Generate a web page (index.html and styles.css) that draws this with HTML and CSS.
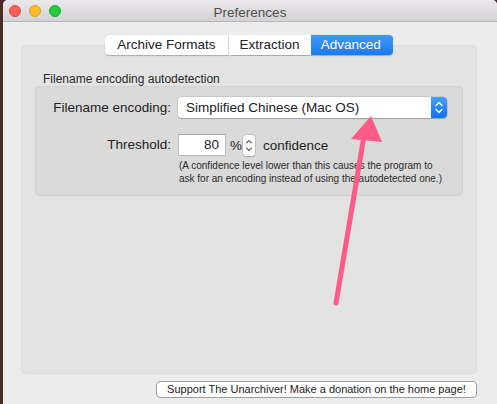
FILE: index.html
```html
<!DOCTYPE html>
<html>
  <head>
    <title>Preferences</title>
    <link rel="stylesheet" href="styles.css">
  </head>
  <body>
    <div class="window">
      <div class="titlebar">
        <div class="lights">
          <span class="light red"></span>
          <span class="light yellow"></span>
          <span class="light green"></span>
        </div>
        <div class="title">Preferences</div>
      </div>
      <div class="content">
        <div class="tabs">
          <div class="tab">Archive Formats</div>
          <div class="tab">Extraction</div>
          <div class="tab active">Advanced</div>
        </div>
        <div class="panel">
          <div class="groupLabel">Filename encoding autodetection</div>
          <div class="group">
            <div class="label">Filename encoding:</div>
            <div class="popup">
              <span class="popupText">Simplified Chinese (Mac OS)</span>
              <span class="popupCap">
                <svg width="16" height="21" viewBox="0 0 16 21">
                  <path d="M5 8.5 L8 5.5 L11 8.5 M5 12.5 L8 15.5 L11 12.5" fill="none" stroke="#fff" stroke-width="1.3" stroke-linecap="round" stroke-linejoin="round"/>
                </svg>
              </span>
            </div>
            <div class="label threshLabel">Threshold:</div>
            <div class="threshRow">
              <div class="field">80</div>
              <span class="pct">%</span>
              <span class="stepper">
                <svg width="12" height="21" viewBox="0 0 12 21">
                  <path d="M3.5 8 L6 5.5 L8.5 8 M3.5 13 L6 15.5 L8.5 13" fill="none" stroke="#6a6a6a" stroke-width="1.1" stroke-linecap="round" stroke-linejoin="round"/>
                </svg>
              </span>
              <span class="conf">confidence</span>
            </div>
            <div></div>
            <div class="note">(A confidence level lower than this causes the program to<br>ask for an encoding instead of using the autodetected one.)</div>
          </div>
        </div>
        <div class="footer">
          <div class="button">Support The Unarchiver! Make a donation on the home page!</div>
        </div>
      </div>
    </div>
    <svg class="arrow" width="497" height="404" viewBox="0 0 497 404">
      <line x1="336" y1="303" x2="364" y2="136" stroke="#fd5a8a" stroke-width="5" stroke-linecap="round"/>
      <polygon points="371,116 351,139 382,142" fill="#fd5a8a"/>
    </svg>
  </body>
</html>
```

FILE: styles.css
```css
body{
    margin:0;
    background:#4b2a28;
    font-family: "Liberation Sans", Arial, sans-serif;
    color:#222;
    overflow:hidden;
}

.window{
    margin-left:3px;
    height:404px;
    background:#ececec;
    border-top-left-radius:5px;
    border-top-right-radius:5px;
    overflow:hidden;
}

.titlebar{
    height:21px;
    border-bottom:1px solid #b8b6b8;
    background:linear-gradient(#ebe9eb, #d4d2d4);
    display:flex;
    align-items:center;
    position:relative;
}
.lights{
    display:flex;
    gap:8px;
    padding-left:6px;
}
.light{
    width:12px;
    height:12px;
    border-radius:50%;
    box-sizing:border-box;
}
.red{ background:#fc5f57; border:1px solid #e2463f; }
.yellow{ background:#fdbc2e; border:1px solid #e1a116; }
.green{ background:#28c840; border:1px solid #14ae2b; }
.title{
    position:absolute;
    left:0;
    right:0;
    top:5px;
    text-align:center;
    font-size:13.5px;
    color:#4d4d4d;
    pointer-events:none;
}

.content{
    padding:13px 20px 0 18px;
}

.tabs{
    display:flex;
    justify-content:center;
    position:relative;
    z-index:1;
    margin-bottom:-10px;
}
.tab{
    height:20px;
    line-height:20px;
    font-size:13.5px;
    padding:0 11px;
    background:#fff;
    border-left:1px solid #dcdcdc;
    box-shadow:0 0.5px 1px rgba(0,0,0,0.25);
}
.tab:first-child{
    border-left:none;
    border-radius:4px 0 0 4px;
    padding:0 12px;
}
.tab.active{
    background:linear-gradient(#3f9bfc, #1a79f5);
    color:#fff;
    border-left:none;
    border-radius:0 4px 4px 0;
    padding:0 12px 0 10px;
}

.panel{
    height:329px;
    box-sizing:border-box;
    background:#e3e3e3;
    border:1px solid #dcdcdc;
    border-radius:4px;
    padding:26px 13px 0 13px;
}
.groupLabel{
    font-size:12px;
    line-height:14px;
    margin-left:8px;
    color:#2a2a2a;
}
.group{
    height:110px;
    box-sizing:border-box;
    background:#dadada;
    border:1px solid #d2d2d2;
    border-radius:4px;
    display:grid;
    grid-template-columns:135px 1fr;
    grid-template-rows:21px 38px auto;
    column-gap:7px;
    align-items:center;
    padding:10px 15px 0 0;
}
.label{
    text-align:right;
    font-size:13.5px;
}

.popup{
    height:21px;
    display:flex;
    background:#fff;
    border-radius:4px;
    box-shadow:0 0 0 0.5px rgba(0,0,0,0.15), 0 1px 1px rgba(0,0,0,0.2);
    overflow:hidden;
}
.popupText{
    flex:1;
    font-size:13.5px;
    line-height:21px;
    padding-left:8px;
}
.popupCap{
    width:16px;
    background:linear-gradient(#46a0fd, #1172ec);
    display:flex;
}

.threshLabel{
    align-self:end;
    line-height:22px;
}
.threshRow{
    align-self:end;
    display:flex;
    align-items:center;
}
.field{
    width:48px;
    height:22px;
    box-sizing:border-box;
    background:#fff;
    border:1px solid #bdbdbd;
    border-top-color:#a9a9a9;
    text-align:right;
    font-size:13.5px;
    line-height:20px;
    padding-right:6px;
}
.pct{
    font-size:13.5px;
    margin-left:4px;
    width:12px;
}
.stepper{
    width:12px;
    height:21px;
    margin-left:1px;
    background:#fff;
    border-radius:3px;
    box-shadow:0 0 0 0.5px rgba(0,0,0,0.2), 0 1px 1px rgba(0,0,0,0.15);
    display:flex;
}
.conf{
    font-size:13.5px;
    margin-left:8px;
}
.note{
    font-size:10px;
    line-height:13px;
    margin-top:3px;
    margin-left:1px;
    color:#2a2a2a;
    align-self:start;
}

.footer{
    display:flex;
    justify-content:flex-end;
    margin-top:7px;
}
.button{
    width:321px;
    height:17px;
    box-sizing:border-box;
    background:#fff;
    border:1px solid #9e9e9e;
    border-radius:4px;
    font-size:11px;
    line-height:15px;
    text-align:center;
}

.arrow{
    position:absolute;
    top:0;
    left:0;
    pointer-events:none;
}
```
